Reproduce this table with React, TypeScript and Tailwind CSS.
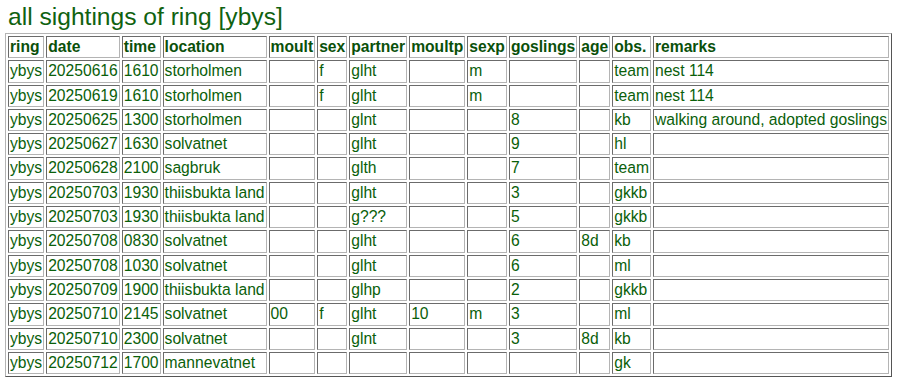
import React from "react";

const cols = ["ring", "date", "time", "location", "moult", "sex", "partner", "moultp", "sexp", "goslings", "age", "obs.", "remarks"];

const rows: string[][] = [
  ["ybys", "20250616", "1610", "storholmen", "", "f", "glht", "", "m", "", "", "team", "nest 114"],
  ["ybys", "20250619", "1610", "storholmen", "", "f", "glht", "", "m", "", "", "team", "nest 114"],
  ["ybys", "20250625", "1300", "storholmen", "", "", "glnt", "", "", "8", "", "kb", "walking around, adopted goslings"],
  ["ybys", "20250627", "1630", "solvatnet", "", "", "glht", "", "", "9", "", "hl", ""],
  ["ybys", "20250628", "2100", "sagbruk", "", "", "glth", "", "", "7", "", "team", ""],
  ["ybys", "20250703", "1930", "thiisbukta land", "", "", "glht", "", "", "3", "", "gkkb", ""],
  ["ybys", "20250703", "1930", "thiisbukta land", "", "", "g???", "", "", "5", "", "gkkb", ""],
  ["ybys", "20250708", "0830", "solvatnet", "", "", "glht", "", "", "6", "8d", "kb", ""],
  ["ybys", "20250708", "1030", "solvatnet", "", "", "glht", "", "", "6", "", "ml", ""],
  ["ybys", "20250709", "1900", "thiisbukta land", "", "", "glhp", "", "", "2", "", "gkkb", ""],
  ["ybys", "20250710", "2145", "solvatnet", "00", "f", "glht", "10", "m", "3", "", "ml", ""],
  ["ybys", "20250710", "2300", "solvatnet", "", "", "glnt", "", "", "3", "8d", "kb", ""],
  ["ybys", "20250712", "1700", "mannevatnet", "", "", "", "", "", "", "", "gk", ""],
];

const cell =
  "border border-solid border-t-[#6b6b6b] border-l-[#6b6b6b] border-r-[#b4b4b4] border-b-[#b4b4b4] p-px text-left align-middle whitespace-nowrap leading-[18.3px] h-[20.3px]";

export default function App() {
  return (
    <div className="bg-white min-h-[386px] text-[#0a600a]" style={{ fontFamily: '"Liberation Sans", Arial, sans-serif' }}>
      <div className="pl-[8px] pt-[3px] text-[24.6px] leading-[28px] text-[#106210]">all sightings of ring [ybys]</div>
      <table className="ml-[5px] mt-[2px] border-separate border-spacing-[2px] border border-solid border-t-[#b4b4b4] border-l-[#b4b4b4] border-r-[#555555] border-b-[#555555] text-[15.65px]">
        <thead>
          <tr>
            {cols.map((c) => (
              <th key={c} className={cell + " font-bold text-[#0a500a]"}>
                {c}
              </th>
            ))}
          </tr>
        </thead>
        <tbody>
          {rows.map((r, i) => (
            <tr key={i}>
              {r.map((v, j) => (
                <td key={j} className={cell}>
                  {v}
                </td>
              ))}
            </tr>
          ))}
        </tbody>
      </table>
    </div>
  );
}
